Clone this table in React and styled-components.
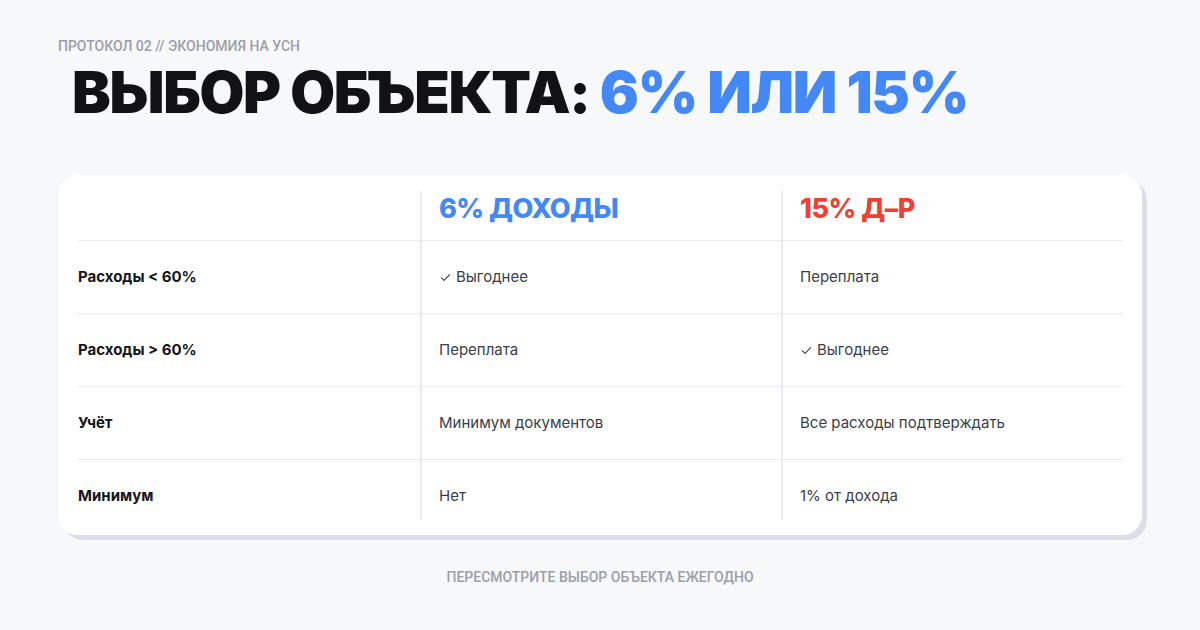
import React from 'react';
import styled, { createGlobalStyle } from 'styled-components';

const GlobalStyle = createGlobalStyle`
  html, body {
    margin: 0;
    padding: 0;
    background: #f7f8fa;
  }
  body {
    font-family: 'Inter', 'Noto Sans', sans-serif;
  }
`;

const Page = styled.div`
  width: 1200px;
  height: 630px;
  box-sizing: border-box;
  padding: 37px 58px 0 58px;
  display: flex;
  flex-direction: column;
`;

const Kicker = styled.div`
  font-family: 'Roboto', sans-serif;
  font-weight: 500;
  font-size: 14px;
  line-height: 18px;
  color: #9b9ea9;
  text-transform: uppercase;
`;

const Title = styled.h1`
  margin: 2px 0 0 0;
  padding-left: 14px;
  font-family: 'Inter', sans-serif;
  font-weight: 900;
  font-size: 58px;
  line-height: 70px;
  letter-spacing: -1.3px;
  color: #121216;
`;

const Accent = styled.span`
  color: #4388f4;
`;

const Card = styled.div`
  margin-top: 48px;
  background: #ffffff;
  border-radius: 20px;
  box-shadow: 5px 5px 0 #dcdfe9;
  padding: 16px 20px;
  height: 360px;
  box-sizing: border-box;
`;

const Table = styled.div`
  display: grid;
  grid-template-columns: 342px 361px 342px;
`;

const Cell = styled.div`
  box-sizing: border-box;
  padding: ${p => (p.$head ? '0' : '26px')} 18px 0 ${p => (p.$first ? '0' : '17px')};
  border-left: ${p => (p.$first ? 'none' : '2px solid #ebecf2')};
  border-bottom: ${p => (p.$last ? 'none' : '1px solid #ebecf0')};
  height: ${p => (p.$head ? '50px' : p.$last ? '60px' : '73px')};
  display: flex;
  align-items: flex-start;
`;

const HeadText = styled.div`
  font-weight: 800;
  font-size: 27px;
  line-height: 36px;
  color: ${p => p.$tone};
  letter-spacing: -0.5px;
`;

const Label = styled.div`
  font-weight: 700;
  font-size: 15px;
  line-height: 20px;
  color: #14151a;
`;

const Value = styled.div`
  font-weight: 400;
  font-size: 15px;
  line-height: 20px;
  color: #3b3e47;
  display: flex;
  align-items: center;
  gap: 4px;
`;

const Check = styled.svg`
  width: 13px;
  height: 13px;
  flex: none;
`;

const Footer = styled.div`
  margin-top: 34px;
  text-align: center;
  font-family: 'Roboto', sans-serif;
  font-weight: 500;
  font-size: 14px;
  color: #9b9ea9;
  text-transform: uppercase;
`;

const rows = [
  { label: 'Расходы < 60%', a: 'Выгоднее', aCheck: true, b: 'Переплата' },
  { label: 'Расходы > 60%', a: 'Переплата', b: 'Выгоднее', bCheck: true },
  { label: 'Учёт', a: 'Минимум документов', b: 'Все расходы подтверждать' },
  { label: 'Минимум', a: 'Нет', b: '1% от дохода' },
];

const Tick = () => (
  <Check viewBox="0 0 16 16" fill="none" stroke="#3b3e47" strokeWidth="1.4" strokeLinecap="round" strokeLinejoin="round">
    <path d="M3 8.5l3.2 3L13 4.5" />
  </Check>
);

export default function App() {
  return (
    <>
      <GlobalStyle />
      <Page>
        <Kicker>Протокол 02 // Экономия на УСН</Kicker>
        <Title>
          ВЫБОР ОБЪЕКТА: <Accent>6% ИЛИ 15%</Accent>
        </Title>
        <Card>
          <Table>
            <Cell $first $head />
            <Cell $head>
              <HeadText $tone="#4388f4">6% ДОХОДЫ</HeadText>
            </Cell>
            <Cell $head>
              <HeadText $tone="#ea4335">15% Д–Р</HeadText>
            </Cell>
            {rows.map((r, i) => {
              const last = i === rows.length - 1;
              return (
                <React.Fragment key={r.label}>
                  <Cell $first $last={last}>
                    <Label>{r.label}</Label>
                  </Cell>
                  <Cell $last={last}>
                    <Value>
                      {r.aCheck && <Tick />}
                      {r.a}
                    </Value>
                  </Cell>
                  <Cell $last={last}>
                    <Value>
                      {r.bCheck && <Tick />}
                      {r.b}
                    </Value>
                  </Cell>
                </React.Fragment>
              );
            })}
          </Table>
        </Card>
        <Footer>Пересмотрите выбор объекта ежегодно</Footer>
      </Page>
    </>
  );
}
